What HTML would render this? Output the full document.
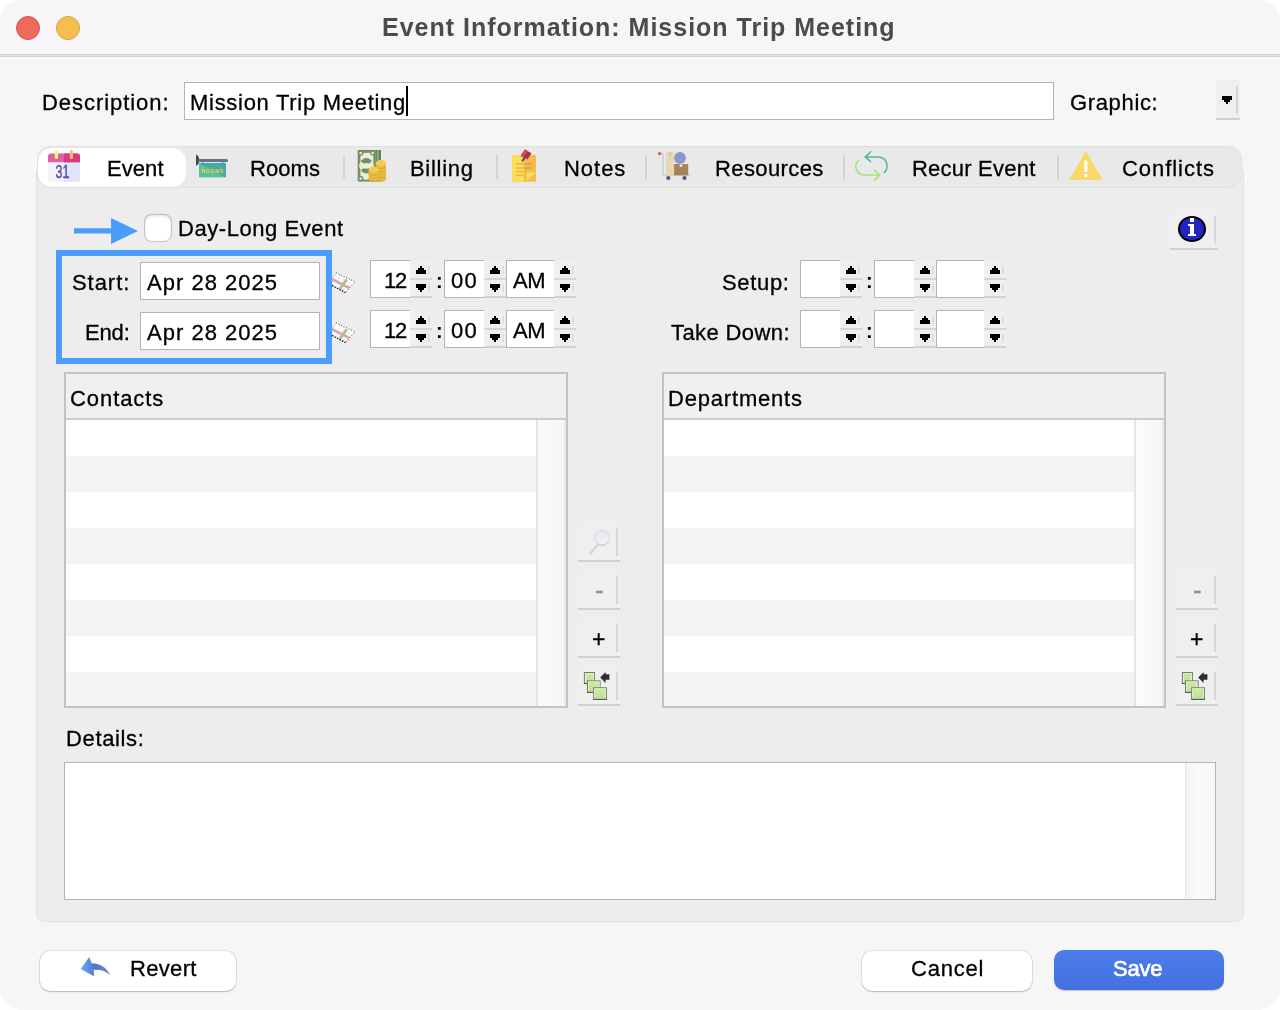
<!DOCTYPE html>
<html><head><meta charset="utf-8"><title>Event Information: Mission Trip Meeting</title>
<style>
html,body{margin:0;padding:0;background:#fff;}
body{width:1280px;height:1010px;position:relative;overflow:hidden;font-family:"Liberation Sans",sans-serif;color:#000;}
.win{will-change:transform;position:absolute;left:0;top:0;width:1280px;height:1010px;background:#f6f6f6;border-radius:22px;overflow:hidden;}
.titlebar{position:absolute;left:0;top:0;width:1280px;height:54px;background:#f7f5f8;border-bottom:1px solid #d2d0d3;box-shadow:0 1px 0 #e7e5e8,0 2px 0 #d4d4d4,inset 0 1px 0 rgba(255,255,255,.55);}
.t{position:absolute;font-size:22px;line-height:40px;white-space:nowrap;letter-spacing:.65px;-webkit-text-stroke:.3px currentColor;}
.title{position:absolute;font-size:25px;font-weight:700;line-height:40px;color:#4b4b4b;letter-spacing:.95px;white-space:nowrap;}
.dot{position:absolute;width:24px;height:24px;border-radius:50%;box-sizing:border-box;top:16px;}
.abs{position:absolute;box-sizing:border-box;}
.inp{position:absolute;box-sizing:border-box;background:#fff;border:1px solid #b4b4b4;}
.tabbar{position:absolute;left:37px;top:146px;width:1205px;height:42px;box-sizing:border-box;background:#e9e9e9;border:1px solid #e0e0e0;border-radius:13px;}
.tabsel{position:absolute;left:38px;top:148px;width:148px;height:38.5px;background:#fff;border-radius:14px;}
.panel{position:absolute;left:36px;top:165px;width:1208px;height:757px;box-sizing:border-box;background:#ededed;border:1px solid #e2e2e2;border-radius:8px;}
.sep{position:absolute;top:155px;width:2px;height:24px;background:#d4d4d4;}
.list{position:absolute;box-sizing:border-box;border:2px solid #c2c2c2;background:#fff;overflow:hidden;}
.lhead{position:absolute;left:0;top:0;right:0;height:44px;background:#f0f0f0;border-bottom:2px solid #cbcbcb;}
.row{position:absolute;left:0;right:0;height:36px;background:#f3f5f5;}
.sb{position:absolute;top:46px;bottom:0;right:0;width:30px;background:linear-gradient(90deg,#fbfbfb,#f6f6f6);border-left:2px solid #e5e5e5;border-right:2px solid #ebebeb;box-sizing:border-box;}
.btn3{position:absolute;width:42px;height:40px;box-sizing:border-box;background:#efefef;border-bottom:2px solid #d0d0d0;}
.btn3:after{content:"";position:absolute;right:2px;top:6px;width:2px;height:28px;background:#d6d6d6;}
.pbtn{position:absolute;box-sizing:border-box;height:39.5px;border-radius:10px;background:#fff;box-shadow:0 0 0 .6px rgba(0,0,0,.13),0 1px 1.5px rgba(0,0,0,.2);text-align:center;}
.tbox{position:absolute;box-sizing:border-box;height:38px;background:#fff;border:1px solid #b4b4b4;border-right:none;}
.spin{position:absolute;width:22px;height:38px;box-sizing:border-box;background:#efefef;border-bottom:2px solid #d2d2d2;}
.spin svg{position:absolute;left:0;top:0;}
.spin i{position:absolute;display:block;background:#d6d6d6;}
.spin .m{left:0;top:18px;width:22px;height:2px;}
.spin .r1{left:18px;top:6px;width:2px;height:8px;background:#dedede;}
.spin .r2{left:18px;top:24px;width:2px;height:8px;background:#dedede;}
</style></head><body>
<div class="win">
 <div class="titlebar"></div>
 <div class="dot" style="left:16px;background:#ec6a5e;border:1px solid #d95548;"></div>
 <div class="dot" style="left:56px;background:#f4bf4f;border:1px solid #d9a23d;"></div>
 <div class="title" style="left:382px;top:7px;letter-spacing:0.99px;">Event Information: Mission Trip Meeting</div>

 <div class="t" style="left:42px;top:83px;letter-spacing:0.94px;">Description:</div>
 <div class="inp" style="left:184px;top:82px;width:870px;height:38px;"></div>
 <div class="t" style="left:190px;top:83px;letter-spacing:0.71px;">Mission Trip Meeting</div>
 <div class="abs" style="left:406px;top:86px;width:2px;height:29.5px;background:#000;"></div>
 <div class="t" style="left:1070px;top:83px;letter-spacing:0.65px;">Graphic:</div>
 <div class="abs" style="left:1216px;top:80px;width:24px;height:40px;background:#efefef;border-bottom:2px solid #d0d0d0;"></div>
 <div class="abs" style="left:1236px;top:86px;width:2px;height:28px;background:#d8d8d8;"></div>
 <svg class="abs" style="left:1218px;top:92px" width="18" height="14" viewBox="0 0 18 14"><path d="M4 4h10v4h-2v2h-2v2h-2v-2H6V8H4z" fill="#000"/></svg>

 <div class="panel"></div>
 <div class="tabbar"></div>
 <div class="tabsel"></div>
 <div class="sep" style="left:343px"></div><div class="sep" style="left:496px"></div><div class="sep" style="left:645px"></div><div class="sep" style="left:843px"></div><div class="sep" style="left:1057px"></div>
 <div class="t" style="left:107px;top:149px;letter-spacing:0.07px;">Event</div>
 <div class="t" style="left:250px;top:149px;letter-spacing:0.05px;">Rooms</div>
 <div class="t" style="left:410px;top:149px;letter-spacing:0.7px;">Billing</div>
 <div class="t" style="left:564px;top:149px;letter-spacing:0.97px;">Notes</div>
 <div class="t" style="left:715px;top:149px;letter-spacing:0.4px;">Resources</div>
 <div class="t" style="left:912px;top:149px;letter-spacing:0.22px;">Recur Event</div>
 <div class="t" style="left:1122px;top:149px;letter-spacing:0.95px;">Conflicts</div>
 <!-- calendar icon -->
 <svg class="abs" style="left:46px;top:148px" width="36" height="36" viewBox="0 0 36 36">
  <rect x="2" y="5.4" width="32" height="28.5" rx="3" fill="#f3f3fc"/>
  <path d="M18 5.4h13a3 3 0 0 1 3 3v22.5a3 3 0 0 1-3 3H18z" fill="#e2e4f7"/>
  <path d="M5 5.4h26a3 3 0 0 1 3 3v5.8H2V8.4a3 3 0 0 1 3-3z" fill="#e0629d"/>
  <path d="M18 5.4h13a3 3 0 0 1 3 3v5.8H18z" fill="#d93a7c"/>
  <rect x="8.8" y="2" width="3.2" height="9" rx="1.6" fill="#fdf27a"/>
  <rect x="23.8" y="2" width="3.2" height="9" rx="1.6" fill="#f5b970"/>
  <text x="9.6" y="30.1" font-family="Liberation Sans, sans-serif" font-size="18" fill="#5752a6" stroke="#5752a6" stroke-width=".5" textLength="14" lengthAdjust="spacingAndGlyphs">31</text>
 </svg>
 <!-- rooms sign icon -->
 <svg class="abs" style="left:194px;top:148px" width="36" height="36" viewBox="0 0 36 36">
  <path d="M2 6.6c2.4 1 3.2 3 3.2 5.6s-.8 4.6-3.2 5.6z" fill="#3c4a56"/>
  <rect x="4" y="11" width="30" height="3" rx="1.5" fill="#5f7686"/>
  <path d="M8.6 14v1.5M28.6 14v1.5" stroke="#6b7f8c" stroke-width="1"/>
  <rect x="5" y="15" width="27" height="14.4" fill="#59c1a0"/>
  <path d="M5 15h27v14.4z" fill="#4ba9a4"/>
  <circle cx="8.6" cy="16" r="1.1" fill="none" stroke="#4a9a9a" stroke-width=".6"/><circle cx="28.6" cy="16" r="1.1" fill="none" stroke="#4a9a9a" stroke-width=".6"/>
  <text x="7.8" y="25" font-family="Liberation Sans, sans-serif" font-size="5" font-weight="700" fill="#f7d936" textLength="21.5" lengthAdjust="spacing">ROOMS</text>
 </svg>
 <!-- billing icon -->
 <svg class="abs" style="left:354px;top:148px" width="36" height="36" viewBox="0 0 36 36">
  <rect x="24.4" y="2" width="2.5" height="31.5" fill="#5a7c4f"/><rect x="22.9" y="2" width="1.5" height="31.5" fill="#88a27c"/><rect x="21.4" y="2" width="1.5" height="31.5" fill="#5f8055"/>
  <rect x="3.7" y="2" width="17.8" height="31.5" fill="#70905f"/>
  <rect x="6.4" y="4.8" width="13" height="26.8" fill="#eceddb"/>
  <g fill="#70905f"><circle cx="6.6" cy="5" r="2.8"/><circle cx="18.9" cy="5" r="2.8"/><circle cx="6.6" cy="30.6" r="2.8"/><circle cx="18.9" cy="30.6" r="2.8"/></g>
  <g fill="#eceddb"><circle cx="6.7" cy="5.1" r="1.3"/><circle cx="18.6" cy="5.1" r="1.3"/><circle cx="6.7" cy="30.6" r="1.3"/></g>
  <ellipse cx="12.4" cy="17.8" rx="6.6" ry="7.8" fill="#70905f"/>
  <path d="M5.2 17.8c0-2 1-3.4 2.2-4.2 1 1.6 3 2.4 5 1.2 2 1.2 4 .4 5-1.2 1.2.8 2.2 2.2 2.2 4.2s-1 3.4-2.2 4.2c-1-1.6-3-2.4-5-1.2-2-1.2-4-.4-5 1.2-1.2-.8-2.2-2.2-2.2-4.2z" fill="#eceddb"/>
  <ellipse cx="26.9" cy="30.60" rx="5.2" ry="2.9" fill="#d9a834"/><ellipse cx="26.9" cy="29.50" rx="5.2" ry="2.9" fill="#ecbd45"/><ellipse cx="26.9" cy="27.48" rx="5.2" ry="2.9" fill="#d9a834"/><ellipse cx="26.9" cy="26.38" rx="5.2" ry="2.9" fill="#ecbd45"/><ellipse cx="26.9" cy="24.36" rx="5.2" ry="2.9" fill="#d9a834"/><ellipse cx="26.9" cy="23.26" rx="5.2" ry="2.9" fill="#ecbd45"/><ellipse cx="26.9" cy="21.24" rx="5.2" ry="2.9" fill="#d9a834"/><ellipse cx="26.9" cy="20.14" rx="5.2" ry="2.9" fill="#ecbd45"/><ellipse cx="26.9" cy="18.12" rx="5.2" ry="2.9" fill="#d9a834"/><ellipse cx="26.9" cy="17.02" rx="5.2" ry="2.9" fill="#ecbd45"/><ellipse cx="26.9" cy="15" rx="5.2" ry="2.9" fill="#f6ca50"/>
  <ellipse cx="19.7" cy="30.80" rx="5.2" ry="2.9" fill="#d9a834"/><ellipse cx="19.7" cy="29.70" rx="5.2" ry="2.9" fill="#ecbd45"/><ellipse cx="19.7" cy="27.70" rx="5.2" ry="2.9" fill="#d9a834"/><ellipse cx="19.7" cy="26.60" rx="5.2" ry="2.9" fill="#ecbd45"/><ellipse cx="19.7" cy="24.60" rx="5.2" ry="2.9" fill="#d9a834"/><ellipse cx="19.7" cy="23.50" rx="5.2" ry="2.9" fill="#ecbd45"/><ellipse cx="19.7" cy="21.5" rx="5.2" ry="2.9" fill="#f6ca50"/>
 </svg>
 <!-- notes icon -->
 <svg class="abs" style="left:508px;top:148px" width="36" height="36" viewBox="0 0 36 36">
  <rect x="4" y="6.9" width="24.1" height="26.8" rx=".8" fill="#f4bd4a"/>
  <path d="M4.8 6.9H16v26.8H4.8a.8.8 0 0 1-.8-.8V7.7a.8.8 0 0 1 .8-.8z" fill="#f9de58"/>
  <path d="M18.7 24.4h8.9L18.9 33.3z" fill="#f9df5c"/>
  <g stroke="#f0b350" stroke-width="1.5"><path d="M7.9 16.1H16M7.9 19.9H16M7.9 23.6h7.5M7.9 27.2h7.5"/></g>
  <g stroke="#e39a4b" stroke-width="1.5"><path d="M16 16.1h8.1M16 19.9h8.1"/></g>
  <path d="M16.6 9.8l-2 3" stroke="#264887" stroke-width="1.9" stroke-linecap="round"/>
  <path d="M17.3 1.7l5.8 3.3c.3.2.4.5.2.8l-3.6 5.3c-.2.3-.5.3-.8.2l-5.8-3.5c-.3-.2-.3-.5-.1-.7l3.5-5.2c.2-.3.5-.4.8-.2z" fill="#b02f45"/>
  <path d="M17.3 1.7l2.4 1.4-4.8 6.5-1.8-1.1c-.3-.2-.3-.5-.1-.7l3.5-5.9c.2-.3.5-.4.8-.2z" fill="#d04b5b"/>
 </svg>
 <!-- resources icon -->
 <svg class="abs" style="left:654px;top:148px" width="38" height="36" viewBox="0 0 38 36">
  <path d="M5.6 5.6H9V27.3H35.8" fill="none" stroke="#c9d1d7" stroke-width="1.6"/>
  <circle cx="5.6" cy="5.6" r="1.6" fill="#cd5954"/>
  <rect x="12" y="4.2" width="8.1" height="23.1" fill="#e7d8b5"/>
  <rect x="15" y="4.2" width="2.4" height="3.8" fill="#d8c49b"/>
  <rect x="20.1" y="16" width="14.1" height="11.3" fill="#a4845d"/>
  <rect x="25.7" y="16" width="2.6" height="3" fill="#f6dcc2"/>
  <circle cx="26" cy="10" r="5.9" fill="#8a96cc"/>
  <circle cx="14.3" cy="30" r="2.1" fill="#4c5682"/><circle cx="30.5" cy="30" r="2.1" fill="#4c5682"/>
 </svg>
 <!-- recur icon -->
 <svg class="abs" style="left:852px;top:148px" width="40" height="36" viewBox="0 0 40 36">
  <path d="M13.3 8.9H26.4A9 9 0 0 1 32.3 24.4" fill="none" stroke="#58b598" stroke-width="1.5" stroke-linecap="round"/>
  <path d="M18.7 3.7L13.3 8.9l5.4 4.7" fill="none" stroke="#58b598" stroke-width="1.5" stroke-linecap="round" stroke-linejoin="round"/>
  <path d="M27.8 26.9H12.6A8.4 8.4 0 0 1 6.7 12.2" fill="none" stroke="#a6e47c" stroke-width="1.5" stroke-linecap="round"/>
  <path d="M22.5 22.2l5.3 4.7-5.3 5.2" fill="none" stroke="#a6e47c" stroke-width="1.5" stroke-linecap="round" stroke-linejoin="round"/>
 </svg>
 <!-- conflicts icon -->
 <svg class="abs" style="left:1068px;top:148px" width="36" height="36" viewBox="0 0 36 36">
  <path d="M17.75 4L34 31.5H2z" fill="#f9d967" stroke="#f9d967" stroke-width="1" stroke-linejoin="round"/>
  <rect x="16.2" y="12.5" width="3.2" height="11.5" rx="1.2" fill="#fff"/><circle cx="17.8" cy="27.6" r="1.8" fill="#fff"/>
 </svg>

 <svg class="abs" style="left:70px;top:212px" width="72" height="38" viewBox="0 0 72 38"><path d="M4 16.2h37v5.4H4z" fill="#4a9df8"/><path d="M41 6L68 19 41 32z" fill="#4a9df8"/></svg>
 <div class="abs" style="left:145px;top:215px;width:26px;height:26px;border-radius:6.5px;background:#fff;box-shadow:0 0 0 1px rgba(0,0,0,.13),0 -.5px 0 1px rgba(0,0,0,.06),inset 0 2px 2.5px rgba(0,0,0,.07),inset 0 0 2.5px rgba(0,0,0,.07);"></div>
 <div class="t" style="left:178px;top:209px;letter-spacing:0.56px;">Day-Long Event</div>
 <div class="abs" style="left:1170px;top:210px;width:48px;height:40px;background:#efefef;border-bottom:2px solid #d0d0d0;"></div>
 <div class="abs" style="left:1214px;top:216px;width:2px;height:28px;background:#d8d8d8;"></div>
 <svg class="abs" style="left:1176px;top:212px" width="32" height="32" viewBox="0 0 32 32"><ellipse cx="16" cy="17" rx="14" ry="13" fill="#000"/><ellipse cx="16" cy="17" rx="12" ry="11" fill="#2424c2"/><path d="M14 6h4v4h-4zM12 12h6v10h2v2h-8v-2h2v-8h-2z" fill="#fffff2"/></svg>
 <div class="abs" style="left:56px;top:250px;width:276px;height:114px;border:6px solid #4a9df8;"></div>
 <div class="t" style="left:72px;top:263px;letter-spacing:0.95px;">Start:</div>
 <div class="inp" style="left:140px;top:262px;width:180px;height:38px;"></div>
 <div class="t" style="left:147px;top:263px;letter-spacing:1.02px;">Apr 28 2025</div>
 <svg class="abs" style="left:330px;top:271px" width="28" height="24" viewBox="0 0 28 24"><path d="M6 1.8L25 10.7 15.5 21.6 2 14.4z" fill="#fff"/><path d="M10 3.7L6 16.4M14 5.6L9.5 18.5M21.5 9L12.5 20" stroke="#bdbdbd" stroke-width=".7" stroke-dasharray="1.6 1.2"/><path d="M2 8.3L19.4 16.9" stroke="#dfa5a3" stroke-width="2.8"/><path d="M16.8 8.4L10 17.7" stroke="#a9c496" stroke-width="3"/><path d="M6 1.8L25 10.7 15.5 21.6" fill="none" stroke="#333" stroke-width=".9" stroke-dasharray="1 1.8"/><path d="M2 14.4L15.5 21.6" fill="none" stroke="#111" stroke-width="1.3" stroke-dasharray="1.6 1.2"/><path d="M6 1.8L2.2 7" fill="none" stroke="#888" stroke-width=".7" stroke-dasharray="1 1.5"/></svg>
 <div class="t" style="left:85px;top:313px;letter-spacing:-0.15px;">End:</div>
 <div class="inp" style="left:140px;top:312px;width:180px;height:38px;"></div>
 <div class="t" style="left:147px;top:313px;letter-spacing:1.02px;">Apr 28 2025</div>
 <svg class="abs" style="left:330px;top:321px" width="28" height="24" viewBox="0 0 28 24"><path d="M6 1.8L25 10.7 15.5 21.6 2 14.4z" fill="#fff"/><path d="M10 3.7L6 16.4M14 5.6L9.5 18.5M21.5 9L12.5 20" stroke="#bdbdbd" stroke-width=".7" stroke-dasharray="1.6 1.2"/><path d="M2 8.3L19.4 16.9" stroke="#dfa5a3" stroke-width="2.8"/><path d="M16.8 8.4L10 17.7" stroke="#a9c496" stroke-width="3"/><path d="M6 1.8L25 10.7 15.5 21.6" fill="none" stroke="#333" stroke-width=".9" stroke-dasharray="1 1.8"/><path d="M2 14.4L15.5 21.6" fill="none" stroke="#111" stroke-width="1.3" stroke-dasharray="1.6 1.2"/><path d="M6 1.8L2.2 7" fill="none" stroke="#888" stroke-width=".7" stroke-dasharray="1 1.5"/></svg>
 <div class="tbox" style="left:370px;top:260px;width:40px;"></div>
 <div class="t" style="left:384px;top:261px;letter-spacing:-1.3px;">12</div>
 <div class="spin" style="left:410px;top:260px;"><i class="m"></i><i class="r1"></i><i class="r2"></i><svg width="22" height="38" viewBox="0 0 22 38"><path d="M10 6h2v2h2v2h2v4H6v-4h2V8h2z" fill="#000"/><path d="M6 24h10v4h-2v2h-2v2h-2v-2H8v-2H6z" fill="#000"/></svg></div>
 <div class="t" style="left:436px;top:261px;letter-spacing:0;font-size:20px;font-weight:700;-webkit-text-stroke:0;">:</div>
 <div class="tbox" style="left:444px;top:260px;width:40px;"></div>
 <div class="t" style="left:451px;top:261px;letter-spacing:1.25px;">00</div>
 <div class="spin" style="left:484px;top:260px;"><i class="m"></i><i class="r1"></i><i class="r2"></i><svg width="22" height="38" viewBox="0 0 22 38"><path d="M10 6h2v2h2v2h2v4H6v-4h2V8h2z" fill="#000"/><path d="M6 24h10v4h-2v2h-2v2h-2v-2H8v-2H6z" fill="#000"/></svg></div>
 <div class="tbox" style="left:506px;top:260px;width:48px;"></div>
 <div class="t" style="left:513px;top:261px;letter-spacing:-0.35px;">AM</div>
 <div class="spin" style="left:554px;top:260px;"><i class="m"></i><i class="r1"></i><i class="r2"></i><svg width="22" height="38" viewBox="0 0 22 38"><path d="M10 6h2v2h2v2h2v4H6v-4h2V8h2z" fill="#000"/><path d="M6 24h10v4h-2v2h-2v2h-2v-2H8v-2H6z" fill="#000"/></svg></div>
 <div class="tbox" style="left:370px;top:310px;width:40px;"></div>
 <div class="t" style="left:384px;top:311px;letter-spacing:-1.3px;">12</div>
 <div class="spin" style="left:410px;top:310px;"><i class="m"></i><i class="r1"></i><i class="r2"></i><svg width="22" height="38" viewBox="0 0 22 38"><path d="M10 6h2v2h2v2h2v4H6v-4h2V8h2z" fill="#000"/><path d="M6 24h10v4h-2v2h-2v2h-2v-2H8v-2H6z" fill="#000"/></svg></div>
 <div class="t" style="left:436px;top:311px;letter-spacing:0;font-size:20px;font-weight:700;-webkit-text-stroke:0;">:</div>
 <div class="tbox" style="left:444px;top:310px;width:40px;"></div>
 <div class="t" style="left:451px;top:311px;letter-spacing:1.25px;">00</div>
 <div class="spin" style="left:484px;top:310px;"><i class="m"></i><i class="r1"></i><i class="r2"></i><svg width="22" height="38" viewBox="0 0 22 38"><path d="M10 6h2v2h2v2h2v4H6v-4h2V8h2z" fill="#000"/><path d="M6 24h10v4h-2v2h-2v2h-2v-2H8v-2H6z" fill="#000"/></svg></div>
 <div class="tbox" style="left:506px;top:310px;width:48px;"></div>
 <div class="t" style="left:513px;top:311px;letter-spacing:-0.35px;">AM</div>
 <div class="spin" style="left:554px;top:310px;"><i class="m"></i><i class="r1"></i><i class="r2"></i><svg width="22" height="38" viewBox="0 0 22 38"><path d="M10 6h2v2h2v2h2v4H6v-4h2V8h2z" fill="#000"/><path d="M6 24h10v4h-2v2h-2v2h-2v-2H8v-2H6z" fill="#000"/></svg></div>
 <div class="tbox" style="left:800px;top:260px;width:40px;"></div>
 <div class="spin" style="left:840px;top:260px;"><i class="m"></i><i class="r1"></i><i class="r2"></i><svg width="22" height="38" viewBox="0 0 22 38"><path d="M10 6h2v2h2v2h2v4H6v-4h2V8h2z" fill="#000"/><path d="M6 24h10v4h-2v2h-2v2h-2v-2H8v-2H6z" fill="#000"/></svg></div>
 <div class="t" style="left:866px;top:261px;letter-spacing:0;font-size:20px;font-weight:700;-webkit-text-stroke:0;">:</div>
 <div class="tbox" style="left:874px;top:260px;width:40px;"></div>
 <div class="spin" style="left:914px;top:260px;"><i class="m"></i><i class="r1"></i><i class="r2"></i><svg width="22" height="38" viewBox="0 0 22 38"><path d="M10 6h2v2h2v2h2v4H6v-4h2V8h2z" fill="#000"/><path d="M6 24h10v4h-2v2h-2v2h-2v-2H8v-2H6z" fill="#000"/></svg></div>
 <div class="tbox" style="left:936px;top:260px;width:48px;"></div>
 <div class="spin" style="left:984px;top:260px;"><i class="m"></i><i class="r1"></i><i class="r2"></i><svg width="22" height="38" viewBox="0 0 22 38"><path d="M10 6h2v2h2v2h2v4H6v-4h2V8h2z" fill="#000"/><path d="M6 24h10v4h-2v2h-2v2h-2v-2H8v-2H6z" fill="#000"/></svg></div>
 <div class="tbox" style="left:800px;top:310px;width:40px;"></div>
 <div class="spin" style="left:840px;top:310px;"><i class="m"></i><i class="r1"></i><i class="r2"></i><svg width="22" height="38" viewBox="0 0 22 38"><path d="M10 6h2v2h2v2h2v4H6v-4h2V8h2z" fill="#000"/><path d="M6 24h10v4h-2v2h-2v2h-2v-2H8v-2H6z" fill="#000"/></svg></div>
 <div class="t" style="left:866px;top:311px;letter-spacing:0;font-size:20px;font-weight:700;-webkit-text-stroke:0;">:</div>
 <div class="tbox" style="left:874px;top:310px;width:40px;"></div>
 <div class="spin" style="left:914px;top:310px;"><i class="m"></i><i class="r1"></i><i class="r2"></i><svg width="22" height="38" viewBox="0 0 22 38"><path d="M10 6h2v2h2v2h2v4H6v-4h2V8h2z" fill="#000"/><path d="M6 24h10v4h-2v2h-2v2h-2v-2H8v-2H6z" fill="#000"/></svg></div>
 <div class="tbox" style="left:936px;top:310px;width:48px;"></div>
 <div class="spin" style="left:984px;top:310px;"><i class="m"></i><i class="r1"></i><i class="r2"></i><svg width="22" height="38" viewBox="0 0 22 38"><path d="M10 6h2v2h2v2h2v4H6v-4h2V8h2z" fill="#000"/><path d="M6 24h10v4h-2v2h-2v2h-2v-2H8v-2H6z" fill="#000"/></svg></div>
 <div class="t" style="left:722px;top:263px;letter-spacing:0.66px;">Setup:</div>
 <div class="t" style="left:671px;top:313px;letter-spacing:0.4px;">Take Down:</div>

 <div class="list" style="left:64px;top:372px;width:504px;height:336px;"><div class="lhead"></div><div class="row" style="top:82px"></div><div class="row" style="top:154px"></div><div class="row" style="top:226px"></div><div class="row" style="top:298px"></div><div class="sb"></div></div>
 <div class="t" style="left:70px;top:379px;letter-spacing:0.93px;">Contacts</div>
 <div class="list" style="left:662px;top:372px;width:504px;height:336px;"><div class="lhead"></div><div class="row" style="top:82px"></div><div class="row" style="top:154px"></div><div class="row" style="top:226px"></div><div class="row" style="top:298px"></div><div class="sb"></div></div>
 <div class="t" style="left:668px;top:379px;letter-spacing:0.81px;">Departments</div>
 <div class="btn3" style="left:578px;top:522px;"><svg class="abs" style="left:8px;top:4px" width="30" height="32" viewBox="0 0 30 32"><defs><linearGradient id="lg" x1="0" y1="0" x2="0" y2="1"><stop offset="0" stop-color="#e4e8ee"/><stop offset="1" stop-color="#f1f1f2"/></linearGradient></defs><path d="M4.6 27.4L12 17.5" stroke="#d3d3d5" stroke-width="2.6" stroke-linecap="round"/><path d="M4.2 26.6L11.4 17.2" stroke="#ececec" stroke-width=".8" stroke-linecap="round"/><circle cx="16.2" cy="11.8" r="7.4" fill="url(#lg)" stroke="#d6d8dc" stroke-width="1"/><path d="M22.8 15a7.4 7.4 0 0 1-9.6 3.6" fill="none" stroke="#c4c4c6" stroke-width="1"/></svg></div>
 <div class="btn3" style="left:578px;top:570px;"><div class="t" style="left:17px;top:0px;font-size:26px;letter-spacing:0;color:#8f8f8f;">-</div></div>
 <div class="btn3" style="left:578px;top:618px;"><div class="t" style="left:14px;top:1px;font-size:23px;letter-spacing:0;">+</div></div>
 <div class="btn3" style="left:578px;top:666px;"><svg class="abs" style="left:4px;top:4px" width="30" height="32" viewBox="0 0 30 32"><defs><linearGradient id="gg1" x1="0" y1="0" x2="0" y2="1"><stop offset="0" stop-color="#c8e9a0"/><stop offset=".7" stop-color="#c2e598"/><stop offset="1" stop-color="#a5d070"/></linearGradient></defs><rect x="2.4" y="2.5" width="10" height="11" fill="url(#gg1)" stroke="#777" stroke-width="1"/><rect x="3.4" y="3.5" width="8" height="9" fill="none" stroke="#e3f6cb" stroke-width=".9"/><path d="M1.9 13.5h11" stroke="#4f4f4f" stroke-width="1"/><rect x="5.5" y="10.9" width="12.6" height="11.4" fill="url(#gg1)" stroke="#777" stroke-width="1"/><rect x="6.5" y="11.9" width="10.6" height="9.4" fill="none" stroke="#e3f6cb" stroke-width=".9"/><path d="M5.0 22.3h13.6" stroke="#4f4f4f" stroke-width="1"/><rect x="11.7" y="17.8" width="12.7" height="11.5" fill="url(#gg1)" stroke="#777" stroke-width="1"/><rect x="12.7" y="18.8" width="10.7" height="9.5" fill="none" stroke="#e3f6cb" stroke-width=".9"/><path d="M11.2 29.3h13.7" stroke="#4f4f4f" stroke-width="1"/><path d="M18.2 7.5L23.6 2.1V4.2H27.4V9.8H23.6V13z" fill="#2e2e2e"/></svg></div>
 <div class="btn3" style="left:1176px;top:570px;"><div class="t" style="left:17px;top:0px;font-size:26px;letter-spacing:0;color:#8f8f8f;">-</div></div>
 <div class="btn3" style="left:1176px;top:618px;"><div class="t" style="left:14px;top:1px;font-size:23px;letter-spacing:0;">+</div></div>
 <div class="btn3" style="left:1176px;top:666px;"><svg class="abs" style="left:4px;top:4px" width="30" height="32" viewBox="0 0 30 32"><defs><linearGradient id="gg2" x1="0" y1="0" x2="0" y2="1"><stop offset="0" stop-color="#c8e9a0"/><stop offset=".7" stop-color="#c2e598"/><stop offset="1" stop-color="#a5d070"/></linearGradient></defs><rect x="2.4" y="2.5" width="10" height="11" fill="url(#gg2)" stroke="#777" stroke-width="1"/><rect x="3.4" y="3.5" width="8" height="9" fill="none" stroke="#e3f6cb" stroke-width=".9"/><path d="M1.9 13.5h11" stroke="#4f4f4f" stroke-width="1"/><rect x="5.5" y="10.9" width="12.6" height="11.4" fill="url(#gg2)" stroke="#777" stroke-width="1"/><rect x="6.5" y="11.9" width="10.6" height="9.4" fill="none" stroke="#e3f6cb" stroke-width=".9"/><path d="M5.0 22.3h13.6" stroke="#4f4f4f" stroke-width="1"/><rect x="11.7" y="17.8" width="12.7" height="11.5" fill="url(#gg2)" stroke="#777" stroke-width="1"/><rect x="12.7" y="18.8" width="10.7" height="9.5" fill="none" stroke="#e3f6cb" stroke-width=".9"/><path d="M11.2 29.3h13.7" stroke="#4f4f4f" stroke-width="1"/><path d="M18.2 7.5L23.6 2.1V4.2H27.4V9.8H23.6V13z" fill="#2e2e2e"/></svg></div>
 <div class="t" style="left:66px;top:719px;letter-spacing:0.63px;">Details:</div>
 <div class="inp" style="left:64px;top:762px;width:1152px;height:138px;"><div class="abs" style="right:0;top:0;bottom:0;width:30px;border-left:1px solid #e4e4e4;background:linear-gradient(90deg,#f4f4f4,#fafafa 40%,#f7f7f7);"></div></div>
 <div class="pbtn" style="left:40px;top:951px;width:196px;"></div>
 <svg class="abs" style="left:78px;top:954px" width="36" height="26" viewBox="0 0 36 26"><defs><linearGradient id="rg" x1="0" y1="0" x2="1" y2="0"><stop offset="0" stop-color="#5fb4ee"/><stop offset=".5" stop-color="#5a6fd0"/><stop offset="1" stop-color="#6c8be0"/></linearGradient></defs><path d="M2.7 15L11.3 3l2.4 6.2c8.5.2 15 4.3 18.8 12-5.5-4.5-11-6-16.8-5.2l.3 6.3z" fill="url(#rg)"/></svg>
 <div class="t" style="left:130px;top:949px;letter-spacing:0.33px;">Revert</div>
 <div class="pbtn" style="left:862px;top:951px;width:170px;"></div>
 <div class="t" style="left:911px;top:949px;letter-spacing:0.78px;">Cancel</div>
 <div class="pbtn" style="left:1054px;top:950px;width:170px;height:40px;background:linear-gradient(#4a7de8,#4570e2);box-shadow:0 1px 1px rgba(0,0,0,.2);"></div>
 <div class="t" style="left:1113px;top:949px;letter-spacing:-0.2px;color:#fff;-webkit-text-stroke:.7px #fff;">Save</div>


</div>
</body></html>
